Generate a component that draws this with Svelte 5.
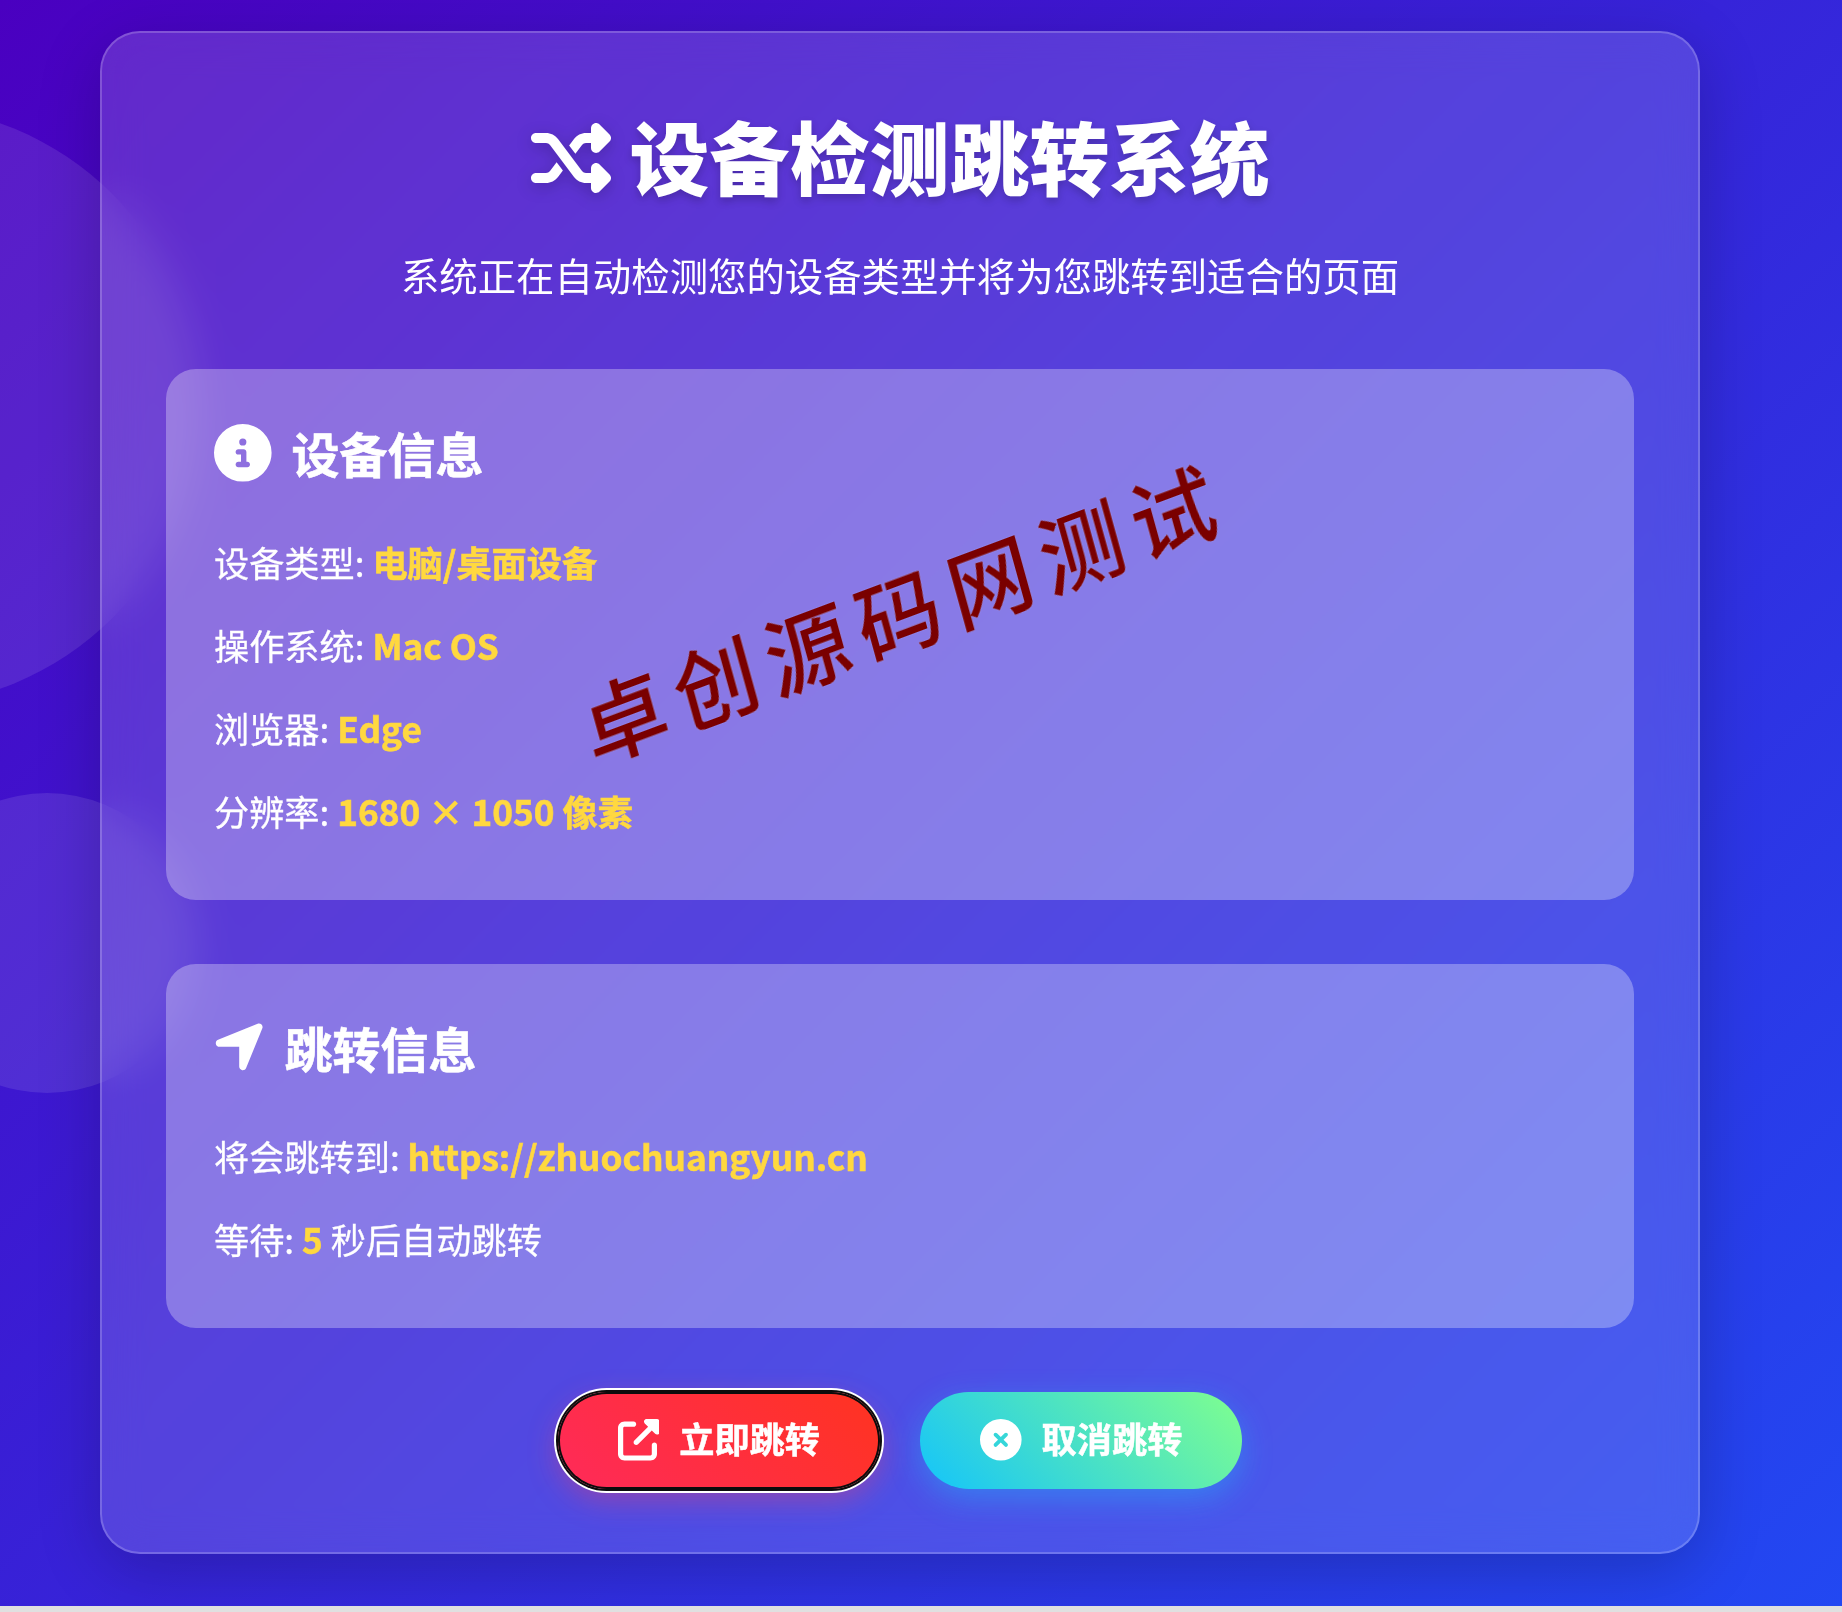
<script>
    const deviceRows = [
        { label: '设备类型', value: '电脑/桌面设备' },
        { label: '操作系统', value: 'Mac OS' },
        { label: '浏览器', value: 'Edge' },
        { label: '分辨率', value: '1680 × 1050 像素' }
    ];

    let seconds = 5;
</script>

<div class="page">
    <div class="circle circle-a"></div>
    <div class="circle circle-b"></div>

    <main class="panel">
        <header>
            <h1>
                <svg class="title-icon" viewBox="0 0 512 512"><path d="M403.8 34.4c12-5 25.7-2.2 34.9 6.9l64 64c6 6 9.4 14.1 9.4 22.6s-3.4 16.6-9.4 22.6l-64 64c-9.2 9.2-22.9 11.9-34.9 6.9s-19.8-16.6-19.8-29.6V160H352c-10.1 0-19.6 4.7-25.6 12.8L284 229.3 244 176l31.2-41.6C293.3 110.2 321.8 96 352 96h32V64c0-12.9 7.8-24.6 19.8-29.6zM164 282.7L204 336l-31.2 41.6C154.7 401.8 126.2 416 96 416H32c-17.7 0-32-14.3-32-32s14.3-32 32-32H96c10.1 0 19.6-4.7 25.6-12.8L164 282.7zm274.6 188c-9.2 9.2-22.9 11.9-34.9 6.9s-19.8-16.6-19.8-29.6V416H352c-30.2 0-58.7-14.2-76.8-38.4L121.6 172.8c-6-8.1-15.5-12.8-25.6-12.8H32c-17.7 0-32-14.3-32-32s14.3-32 32-32H96c30.2 0 58.7 14.2 76.8 38.4L326.4 339.2c6 8.1 15.5 12.8 25.6 12.8h32V320c0-12.9 7.8-24.6 19.8-29.6s25.7-2.2 34.9 6.9l64 64c6 6 9.4 14.1 9.4 22.6s-3.4 16.6-9.4 22.6l-64 64z"/></svg>
                <span class="title-text">设备检测跳转系统</span>
            </h1>
            <p class="subtitle">系统正在自动检测您的设备类型并将为您跳转到适合的页面</p>
        </header>

        <section class="card">
            <h2>
                <svg class="card-icon" viewBox="0 0 512 512"><path d="M256 512A256 256 0 1 0 256 0a256 256 0 1 0 0 512zM216 336h24V272H216c-13.3 0-24-10.7-24-24s10.7-24 24-24h48c13.3 0 24 10.7 24 24v88h8c13.3 0 24 10.7 24 24s-10.7 24-24 24H216c-13.3 0-24-10.7-24-24s10.7-24 24-24zm40-208a32 32 0 1 1 0 64 32 32 0 1 1 0-64z"/></svg>
                设备信息
            </h2>
            {#each deviceRows as row}
                <p class="row">{row.label}: <span class="hl">{row.value}</span></p>
            {/each}
        </section>

        <section class="card">
            <h2>
                <svg class="card-icon arrow" viewBox="0 0 448 512"><path d="M429.6 92.1c4.9-11.9 2.1-25.6-7-34.7s-22.8-11.9-34.7-7l-352 144c-14.2 5.8-22.2 20.8-19.3 35.8s16.1 25.8 31.4 25.8H224V432c0 15.3 10.8 28.4 25.8 31.4s30-5.1 35.8-19.3l144-352z"/></svg>
                跳转信息
            </h2>
            <p class="row">将会跳转到: <span class="hl">https://zhuochuangyun.cn</span></p>
            <p class="row">等待: <span class="hl">{seconds}</span> 秒后自动跳转</p>
        </section>

        <div class="actions">
            <button class="btn go">
                <svg class="btn-icon" viewBox="0 0 512 512"><path d="M352 0c-12.9 0-24.6 7.8-29.6 19.8s-2.2 25.7 6.9 34.9L370.7 96 201.4 265.4c-12.5 12.5-12.5 32.8 0 45.3s32.8 12.5 45.3 0L416 141.3l41.4 41.4c9.2 9.2 22.9 11.9 34.9 6.9s19.8-16.6 19.8-29.6V32c0-17.7-14.3-32-32-32H352zM80 32C35.8 32 0 67.8 0 112V432c0 44.2 35.8 80 80 80H400c44.2 0 80-35.8 80-80V320c0-17.7-14.3-32-32-32s-32 14.3-32 32V432c0 8.8-7.2 16-16 16H80c-8.8 0-16-7.2-16-16V112c0-8.8 7.2-16 16-16H192c17.7 0 32-14.3 32-32s-14.3-32-32-32H80z"/></svg>
                立即跳转
            </button>
            <button class="btn cancel">
                <svg class="btn-icon" viewBox="0 0 512 512"><path d="M256 512A256 256 0 1 0 256 0a256 256 0 1 0 0 512zM175 175c9.4-9.4 24.6-9.4 33.9 0l47 47 47-47c9.4-9.4 24.6-9.4 33.9 0s9.4 24.6 0 33.9l-47 47 47 47c9.4 9.4 9.4 24.6 0 33.9s-24.6 9.4-33.9 0l-47-47-47 47c-9.4 9.4-24.6 9.4-33.9 0s-9.4-24.6 0-33.9l47-47-47-47c-9.4-9.4-9.4-24.6 0-33.9z"/></svg>
                取消跳转
            </button>
        </div>
    </main>

    <div class="watermark">卓创源码网测试</div>
</div>

<style>
    :global(body) {
        margin: 0;
        background: #e0e0e0;
    }
    .page {
        position: relative;
        height: 1606px;
        box-sizing: border-box;
        padding: 31px 100px 0;
        overflow: hidden;
        background: linear-gradient(135deg, #4a00c0, #2248f2);
        color: #fff;
        font-family: "Noto Sans CJK SC", "Noto Sans", sans-serif;
        line-height: 1.6;
    }
    .circle {
        position: absolute;
        border-radius: 50%;
        background: rgba(255, 255, 255, 0.1);
    }
    .circle-a {
        width: 600px;
        height: 600px;
        left: -400px;
        top: 106px;
    }
    .circle-b {
        width: 300px;
        height: 300px;
        left: -103px;
        top: 793px;
    }
    .panel {
        position: relative;
        box-sizing: border-box;
        width: 1600px;
        padding: 64px 64px 63.5px;
        background: rgba(255, 255, 255, 0.15);
        border: 2px solid rgba(255, 255, 255, 0.2);
        border-radius: 40px;
        box-shadow: 0 16px 64px rgba(0, 0, 0, 0.2);
        backdrop-filter: blur(20px);
    }
    header {
        text-align: center;
        margin-bottom: 64px;
    }
    h1 {
        display: flex;
        justify-content: center;
        align-items: center;
        gap: 19px;
        height: 122px;
        margin: 0 0 25px;
        font-size: 80px;
        font-weight: 900;
        text-shadow: 0 4px 8px rgba(0, 0, 0, 0.2);
    }
    .title-text {
        margin-bottom: 8px;
    }
    .title-icon {
        width: 80px;
        height: 80px;
        fill: #fff;
        filter: drop-shadow(0 4px 8px rgba(0, 0, 0, 0.2));
    }
    .subtitle {
        margin: 0;
        font-size: 38.4px;
    }
    .card {
        padding: 45px 48px 47.5px;
        margin-bottom: 64px;
        background: rgba(255, 255, 255, 0.3);
        border-radius: 30px;
    }
    h2 {
        display: flex;
        align-items: center;
        gap: 20px;
        margin: 0 0 29.5px;
        font-size: 48px;
        font-weight: 700;
        -webkit-text-stroke: 0.6px #fff;
    }
    .card-icon {
        width: 57.6px;
        height: 57.6px;
        fill: #fff;
    }
    .card-icon.arrow {
        width: 50.4px;
    }
    .row {
        margin: 0;
        padding: 13.3px 0;
        font-size: 35.2px;
        -webkit-text-stroke: 0.3px #fff;
    }
    .hl {
        color: #ffd83f;
        font-weight: 700;
        -webkit-text-stroke: 0.6px #ffd83f;
    }
    .actions {
        display: flex;
        justify-content: center;
        gap: 40px;
    }
    .btn {
        display: flex;
        align-items: center;
        gap: 20px;
        padding: 18px 60px 22px;
        border: none;
        border-radius: 100px;
        color: #fff;
        font-family: inherit;
        font-size: 35.2px;
        font-weight: 700;
        line-height: 1.6;
        -webkit-text-stroke: 0.5px #fff;
    }
    .btn-icon {
        width: 41.6px;
        height: 41.6px;
        margin-top: 3px;
        fill: #fff;
    }
    .go {
        background: linear-gradient(45deg, #ff2a5a, #ff3320);
        box-shadow: inset 0 0 0 2px #0c0c0c, 0 0 0 2px #0c0c0c, 0 0 0 4px #fff, 0 10px 30px rgba(255, 60, 90, 0.4);
    }
    .cancel {
        background: linear-gradient(45deg, #14c4fb, #80ff8e);
        box-shadow: 0 10px 30px rgba(30, 190, 250, 0.4);
    }
    .watermark {
        position: absolute;
        left: 903px;
        top: 610px;
        transform: translate(-50%, -50%) rotate(-20.5deg) skewX(-5deg);
        white-space: nowrap;
        color: #7a0000;
        font-size: 86px;
        font-weight: 500;
        letter-spacing: 11.5px;
        line-height: 1;
        text-shadow: 0 0 1px rgba(255, 255, 255, 0.5);
    }
</style>
